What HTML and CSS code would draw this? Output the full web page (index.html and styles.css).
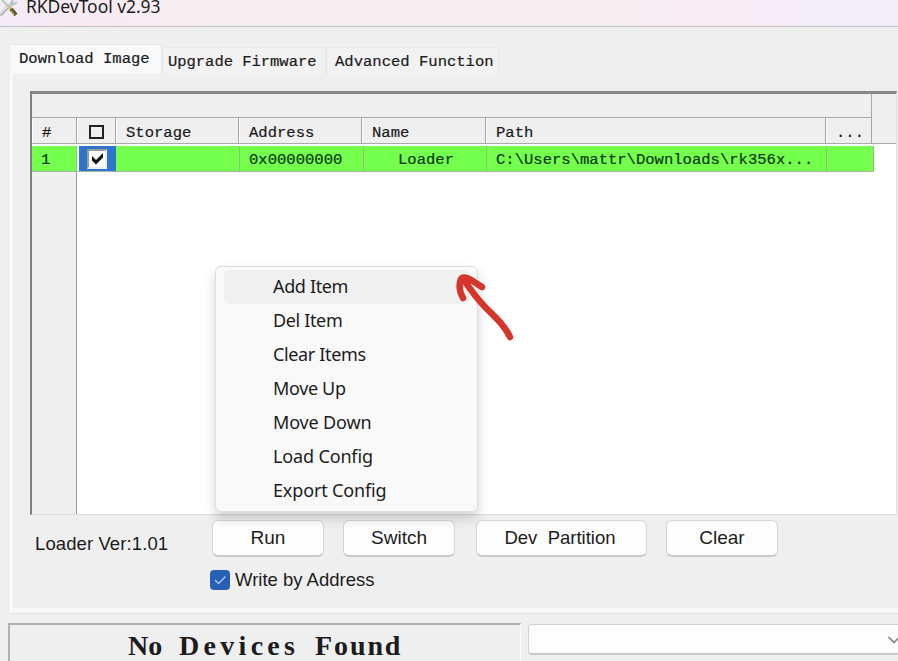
FILE: index.html
```
<!DOCTYPE html>
<html lang="en">
<head>
<meta charset="utf-8">
<title>RKDevTool v2.93</title>
<link rel="stylesheet" href="styles.css">
</head>
<body>
<header class="titlebar">
  <svg class="logo" width="20" height="18" viewBox="0 0 20 18">
    <path d="M0 15L13 2" stroke="#a9b4b4" stroke-width="3.4"/>
    <path d="M0 14L12 2" stroke="#e5ecea" stroke-width="1.4"/>
    <path d="M11 4l2-4M13 5l4-3" stroke="#b9c3c6" stroke-width="2"/>
    <path d="M2 0l8 8" stroke="#bfc5bc" stroke-width="2"/>
    <path d="M9 7l3 3" stroke="#d9bd4c" stroke-width="3"/>
    <path d="M11 9l5 6" stroke="#5c5635" stroke-width="4"/>
    <path d="M11 11l3 4" stroke="#d4b546" stroke-width="1.5"/>
  </svg>
  <span class="title">RKDevTool v2.93</span>
</header>
<nav class="tabs">
  <div class="tab active">Download Image</div>
  <div class="tab upgrade">Upgrade Firmware</div>
  <div class="tab advanced">Advanced Function</div>
</nav>
<main class="panel">
  <section class="grid">
    <div class="band"><div class="band-cell"></div></div>
    <div class="row head">
      <span>#</span><span class="center"><i class="box"></i></span><span>Storage</span><span>Address</span><span>Name</span><span>Path</span><span>...</span>
    </div>
    <div class="row item">
      <span>1</span>
      <span class="selected"><i class="check"><svg width="18" height="18" viewBox="0 0 18 18"><path d="M3 5l4 4 7-7v4.500l-7 7-4-4z" fill="#111"/></svg></i></span>
      <span></span><span>0x00000000</span><span class="name">Loader</span><span>C:\Users\mattr\Downloads\rk356x...</span><span></span>
    </div>
    <div class="gutter"></div>
  </section>
  <section class="actions">
    <span class="version">Loader Ver:1.01</span>
    <button class="run">Run</button>
    <button class="switch">Switch</button>
    <button class="dev">Dev&nbsp; Partition</button>
    <button class="clear">Clear</button>
  </section>
  <label class="option">
    <i class="tick"><svg width="20" height="20" viewBox="0 0 20 20"><path d="M5 10l3.500 3.500 7-7" fill="none" stroke="#b5cdec" stroke-width="1.300"/></svg></i>
    <span>Write by Address</span>
  </label>
</main>
<footer class="bottom">
  <div class="status"><span class="w-no">No </span><span class="w-devices">Devices </span><span class="w-found">Found</span></div>
  <div class="combo"><svg width="14" height="10" viewBox="0 0 14 10"><path d="M1.500 2L7 7.500 12.500 2" fill="none" stroke="#777" stroke-width="1.500"/></svg></div>
</footer>
<div class="menu">
  <div class="entry hover">Add Item</div>
  <div class="entry">Del Item</div>
  <div class="entry">Clear Items</div>
  <div class="entry">Move Up</div>
  <div class="entry wide">Move Down</div>
  <div class="entry wide">Load Config</div>
  <div class="entry wide">Export Config</div>
</div>
<svg class="arrow" width="64" height="74" viewBox="0 0 64 74">
  <path d="M60 67C55 56 47 49 37 39C26 28 20 19 14 10M13 28C9 22 9 14 11 9C13 6 18 8 21 10L32 17" fill="none" stroke="#d6352b" stroke-width="6.600" stroke-linecap="round" stroke-linejoin="round"/>
</svg>
</body>
</html>
```
FILE: styles.css
```
* { box-sizing: border-box; }
body {
  margin: 0;
  width: 898px;
  height: 661px;
  overflow: hidden;
  position: relative;
  background: #efefef;
  color: #1c1c1c;
  font-family: "Liberation Sans", sans-serif;
}
.titlebar {
  height: 27px;
  display: flex;
  align-items: flex-start;
  gap: 6px;
  border-bottom: 1px solid #bdbdbd;
  background: linear-gradient(90deg, #f3ecf8 0, #f8eaf3 75px, #f5eff0 240px, #f5eff1 600px, #f8ebf4 720px, #f3eef8 840px);
}
.title {
  font: 17.5px/22px "Noto Sans", sans-serif;
  margin-top: -5px;
  letter-spacing: -0.05px;
  white-space: nowrap;
}
.tabs {
  height: 47px;
  padding: 17px 0 0 9px;
  display: flex;
  align-items: flex-end;
}
.tab, .row {
  font-family: "Liberation Mono", monospace;
  font-size: 15.55px;
  white-space: pre;
  -webkit-text-stroke: 0.2px #151515;
}
.tab {
  height: 27px;
  line-height: 29px;
  background: #f2f2f2;
  border: 1px solid #e8e8e8;
  border-bottom: 0;
}
.active { width: 153px; height: 30px; padding-left: 9px; background: #f9f9f9; }
.upgrade { width: 164px; padding-left: 5px; letter-spacing: -0.05px; }
.advanced { width: 173px; padding-left: 8px; }
.panel {
  height: 539px;
  margin-left: 9px;
  padding: 17px 0 0 17px;
  border-left: 4px solid #f8f8f8;
  border-bottom: 5px solid #f8f8f8;
  box-shadow: 0 1px #e2e2e2, -1px 0 #e7e7e7;
}
.grid {
  width: 867px;
  height: 424px;
  display: flex;
  flex-direction: column;
  background: #fff;
  border-top: 3px solid #878787;
  border-left: 2px solid #808080;
  border-right: 1px solid #e4e4e4;
  border-bottom: 1px solid #dcdcdc;
}
.band { height: 24px; background: #efefef; }
.band-cell {
  width: 840px;
  height: 24px;
  border-right: 1px solid #a9a9a9;
  border-bottom: 1px solid #a9a9a9;
}
.row {
  display: grid;
  grid-template-columns: 45px 39px 123px 123px 124px 340px 46px;
  height: 26px;
}
.row span { padding-left: 9px; overflow: hidden; }
.head {
  background: #efefef;
  border-bottom: 1px solid #aaa;
  line-height: 31px;
}
.head span { padding-left: 10px; border-right: 1px solid #a5a5a5; box-shadow: inset 1px 0 #fcfcfc; }
.head .center { padding: 7px 0 0 12px; }
.box { display: block; width: 15px; height: 14px; border: 2px solid #222; }
.item {
  margin-top: 2px;
  width: 842px;
  grid-template-columns: 45px 39px 124px 124px 123px 340px 47px;
  background: #75ff4d;
  border-bottom: 1px solid #a8b4a3;
  line-height: 28px;
  color: #0c360c;
  -webkit-text-stroke-color: #0c360c;
}
.item span { border-right: 1px solid #8ac27c; }
.item .selected { background: #2f75cd; padding: 3px 0 0 8px; border-left: 2px solid #fff; border-right: 0; }
.item .name { padding-left: 34px; }
.check { display: block; width: 20px; height: 20px; background: #fff; border: 2px solid #999; border-right-color: #eee; border-bottom-color: #eee; }
.check svg { display: block; }
.gutter { flex: 1; width: 45px; background: #efefef; border-right: 1px solid #999; }
.actions { display: flex; align-items: flex-start; height: 49px; padding: 5px 0 0 5px; font-size: 18.5px; }
.version { width: 177px; line-height: 48px; letter-spacing: 0.1px; white-space: nowrap; }
button {
  height: 37px;
  padding: 0;
  font: 19px "Liberation Sans", sans-serif;
  color: #1c1c1c;
  background: #fdfdfd;
  border: 1px solid #d5d5d5;
  border-bottom: 2px solid #c8c8c8;
  border-radius: 6px;
  white-space: nowrap;
}
.run, .switch, .clear { width: 112px; }
.switch { margin-left: 19px; }
.dev { width: 171px; margin-left: 21px; font-size: 18.5px; padding-right: 3px; }
.clear { margin-left: 19px; }
.option { display: flex; align-items: center; gap: 5px; padding: 4px 0 0 180px; font-size: 18.5px; white-space: nowrap; }
.option span { padding-top: 1px; }
.tick { width: 20px; height: 20px; background: #285fb5; border-radius: 4px; }
.tick svg { display: block; }
.bottom { display: flex; align-items: flex-start; gap: 7px; padding: 10px 0 0 8px; }
.status {
  flex: none;
  display: flex;
  width: 513px;
  height: 48px;
  padding-left: 118px;
  border-top: 2px solid #b2b2b2;
  border-left: 2px solid #b2b2b2;
  border-right: 1px solid #fbfbfb;
  font: bold 28px/42px "Liberation Serif", serif;
  white-space: pre;
}
.w-no { width: 51px; }
.w-devices { width: 136px; letter-spacing: 4.3px; }
.w-found { letter-spacing: 1.9px; }
.combo {
  flex: none;
  width: 380px;
  height: 31px;
  margin-top: 1px;
  padding: 10px 0 0 358px;
  background: #fdfdfd;
  border: 1px solid #d2d2d2;
  border-bottom: 2px solid #c8c8c8;
  border-radius: 4px;
}
.combo svg { display: block; }
.menu {
  position: absolute;
  left: 215px;
  top: 266px;
  width: 263px;
  height: 246px;
  padding: 3px 8px;
  background: #f9f9f9;
  border: 1px solid #dedede;
  border-radius: 6px;
  box-shadow: 0 6px 12px rgba(0,0,0,0.18);
}
.entry { height: 34px; padding-left: 49px; border-radius: 5px; font: 18px/32px "Noto Sans", sans-serif; letter-spacing: -0.35px; white-space: nowrap; }
.wide { letter-spacing: -0.15px; }
.hover { background: #f0f0f0; }
.arrow { position: absolute; left: 450px; top: 270px; }
```
